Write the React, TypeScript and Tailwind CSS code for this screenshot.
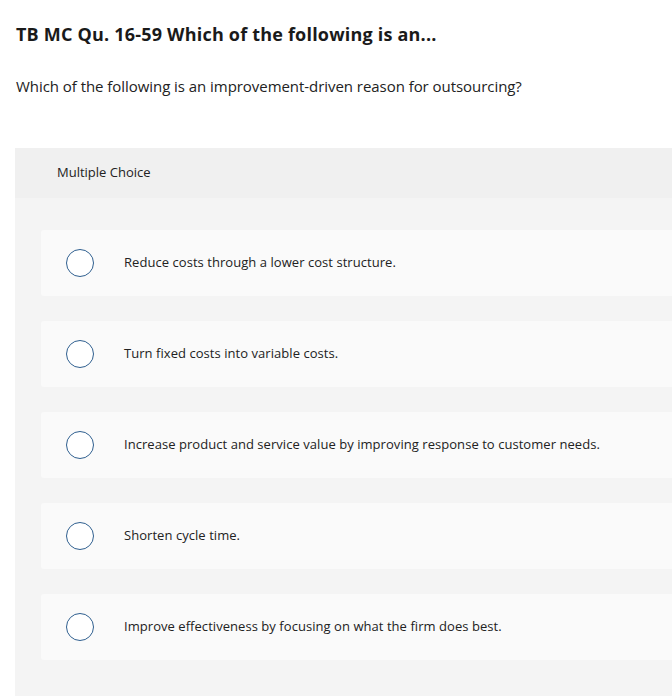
const options = [
  "Reduce costs through a lower cost structure.",
  "Turn fixed costs into variable costs.",
  "Increase product and service value by improving response to customer needs.",
  "Shorten cycle time.",
  "Improve effectiveness by focusing on what the firm does best.",
];

export default function App() {
  return (
    <div className="h-[696px] w-[672px] overflow-hidden bg-white font-['Open_Sans',sans-serif] text-[#1a1a1a]">
      <h1 className="pl-4 pt-[22px] text-[18px] font-bold leading-[24px] tracking-[0.2px]">
        TB MC Qu. 16-59 Which of the following is an...
      </h1>
      <p className="mt-[30px] pl-4 text-[15px] leading-[20px] tracking-[-0.05px] text-[#222]">
        Which of the following is an improvement-driven reason for outsourcing?
      </p>

      <div className="ml-[15px] mt-[52px] bg-[#f4f4f4]">
        <div className="flex h-[50px] items-center bg-[#f0f0f0] pl-[42px] text-[13px] text-[#222]">
          Multiple Choice
        </div>
        <div className="flex flex-col gap-[25px] pb-[40px] pl-[26px] pt-[32px]">
          {options.map((text) => (
            <label
              key={text}
              className="flex h-[66px] cursor-pointer items-center rounded-l-[3px] bg-[#fafafa] pl-[25px]"
            >
              <span className="h-[28px] w-[28px] shrink-0 rounded-full border-[1.5px] border-[#2f5f8f] bg-white" />
              <span className="ml-[30px] text-[13px] tracking-[0.05px] text-[#222]">{text}</span>
            </label>
          ))}
        </div>
      </div>
    </div>
  );
}
